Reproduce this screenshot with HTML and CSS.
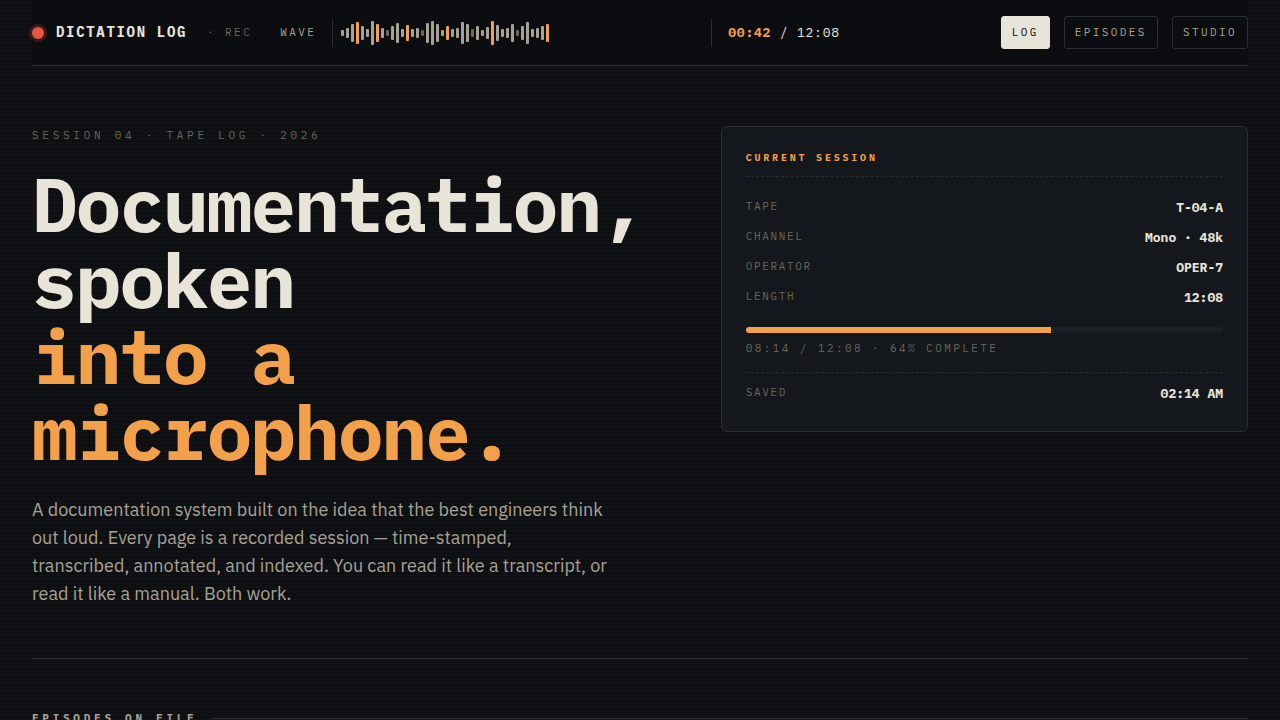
FILE: index.html
```html
<!DOCTYPE html>
<html lang="en">
<head>
    <meta charset="UTF-8">
    <meta name="viewport" content="width=device-width, initial-scale=1.0">
    <title>Dictation Log</title>
    <link rel="stylesheet" href="styles.css">
</head>
<body>
    <div class="page">
        <header class="deck">
            <div class="brand">
                <span class="rec-dot"></span>
                <span class="brand-name">DICTATION LOG</span>
                <span class="rec-label">· REC</span>
            </div>
            <div class="transport">
                <span class="wave-label">WAVE</span>
                <div class="wave" id="wave"></div>
                <div class="time"><b>00:42</b> / 12:08</div>
            </div>
            <nav class="tabs">
                <a class="tab active" href="#log">LOG</a>
                <a class="tab" href="#episodes">EPISODES</a>
                <a class="tab" href="#studio">STUDIO</a>
            </nav>
        </header>

        <main>
            <section class="hero" id="log">
                <div class="hero-text">
                    <p class="eyebrow">SESSION 04 · TAPE LOG · 2026</p>
                    <h1>Documentation, spoken <span class="accent">into a microphone.</span></h1>
                    <p class="lede">A documentation system built on the idea that the best engineers think out loud. Every page is a recorded session — time-stamped, transcribed, annotated, and indexed. You can read it like a transcript, or read it like a manual. Both work.</p>
                </div>

                <aside class="card">
                    <h2 class="card-title">CURRENT SESSION</h2>
                    <dl class="facts">
                        <div class="row"><dt>TAPE</dt><dd>T-04-A</dd></div>
                        <div class="row"><dt>CHANNEL</dt><dd>Mono · 48k</dd></div>
                        <div class="row"><dt>OPERATOR</dt><dd>OPER-7</dd></div>
                        <div class="row"><dt>LENGTH</dt><dd>12:08</dd></div>
                    </dl>
                    <div class="meter"><div class="meter-fill" style="width: 64%"></div></div>
                    <p class="meter-text">08:14 / 12:08 · 64% COMPLETE</p>
                    <dl class="facts saved">
                        <div class="row"><dt>SAVED</dt><dd>02:14 AM</dd></div>
                    </dl>
                </aside>
            </section>

            <section class="episodes" id="episodes">
                <h2 class="section-title">EPISODES ON FILE</h2>
            </section>
        </main>
    </div>

    <script src="script.js"></script>
</body>
</html>
```

FILE: styles.css
```css
:root {
    --bg: #0e0f12;
    --deck: #0c0d10;
    --card: #14171b;
    --track: #1c2024;
    --line: #2a2e36;
    --text: #e8e4d8;
    --soft: #a8a294;
    --dim: #6b675c;
    --amber: #f2a04a;
    --red: #e85545;
    --mono: "IBM Plex Mono", "Liberation Mono", monospace;
    --sans: "IBM Plex Sans", "Open Sans", sans-serif;
}
* {
    box-sizing: border-box;
}
body {
    margin: 0;
    background-color: var(--bg);
    background-image: repeating-linear-gradient(
        180deg,
        transparent 0,
        transparent 3px,
        rgba(255, 255, 255, 0.02) 3px,
        rgba(255, 255, 255, 0.02) 4px
    );
    color: var(--text);
    font-family: var(--sans);
}
h1, h2, p, dl, dd {
    margin: 0;
}
.page {
    max-width: 1280px;
    margin: 0 auto;
    padding: 0 32px;
}

/* top bar */
.deck {
    display: grid;
    grid-template-columns: auto 1fr auto;
    align-items: center;
    gap: 28px;
    padding: 16px 0;
    background: var(--deck);
    border-bottom: 1px solid var(--line);
    font-family: var(--mono);
    font-size: 11px;
    line-height: 15px;
    letter-spacing: 0.22em;
}
.brand {
    display: flex;
    align-items: center;
    gap: 12px;
}
.rec-dot {
    width: 12px;
    height: 12px;
    border-radius: 50%;
    background: var(--red);
    box-shadow: 0 0 0 3px rgba(232, 85, 69, 0.2);
}
.brand-name {
    font-size: 14px;
    font-weight: 700;
    letter-spacing: 0.12em;
}
.rec-label {
    margin-left: 8px;
    color: var(--dim);
}
.transport {
    display: flex;
    align-items: center;
    gap: 16px;
}
.wave-label {
    color: var(--soft);
}
.wave {
    flex: 0 1 380px;
    display: flex;
    align-items: center;
    gap: 2px;
    height: 28px;
    padding: 0 8px;
    overflow: hidden;
    border-left: 1px solid var(--line);
    border-right: 1px solid var(--line);
}
.bar {
    flex: none;
    width: 3px;
    border-radius: 1px;
    background: var(--soft);
}
.bar.hot {
    background: var(--amber);
}
.bar.low {
    background: var(--dim);
}
.time {
    font-size: 13px;
    letter-spacing: 0.06em;
    white-space: nowrap;
}
.time b {
    color: var(--amber);
}
.tabs {
    display: flex;
    gap: 14px;
}
.tab {
    padding: 8px 10px;
    border: 1px solid var(--line);
    border-radius: 3px;
    color: var(--soft);
    text-decoration: none;
}
.tab.active {
    background: var(--text);
    border-color: var(--text);
    color: var(--deck);
}

/* hero */
.hero {
    display: grid;
    grid-template-columns: 1.2fr 1fr;
    align-items: start;
    gap: 56px;
    padding: 60px 0 50px;
    border-bottom: 1px solid var(--line);
}
.eyebrow {
    margin-bottom: 22px;
    color: var(--dim);
    font-family: var(--mono);
    font-size: 11px;
    line-height: 18px;
    letter-spacing: 0.34em;
}
h1 {
    margin-bottom: 26px;
    font-family: var(--mono);
    font-size: 76px;
    font-weight: 700;
    line-height: 76px;
    letter-spacing: -0.025em;
}
.accent {
    display: block;
    color: var(--amber);
}
.lede {
    max-width: 580px;
    color: var(--soft);
    font-size: 18px;
    line-height: 28px;
}

/* session card */
.card {
    padding: 24px;
    background: var(--card);
    border: 1px solid var(--line);
    border-radius: 6px;
    font-family: var(--mono);
}
.card-title {
    margin-bottom: 14px;
    padding-bottom: 12px;
    border-bottom: 1px dashed var(--line);
    color: var(--amber);
    font-size: 10px;
    line-height: 13px;
    letter-spacing: 0.28em;
}
.row {
    display: flex;
    justify-content: space-between;
    padding: 8px 0 4px;
}
.row dt {
    color: var(--dim);
    font-size: 11px;
    line-height: 14px;
    letter-spacing: 0.15em;
}
.row dd {
    font-size: 13px;
    font-weight: 700;
    line-height: 18px;
}
.meter {
    height: 6px;
    margin: 16px 0 8px;
    overflow: hidden;
    border-radius: 3px;
    background: var(--track);
}
.meter-fill {
    height: 100%;
    background: var(--amber);
}
.meter-text {
    margin-bottom: 16px;
    color: var(--dim);
    font-size: 11px;
    line-height: 15px;
    letter-spacing: 0.22em;
}
.saved {
    padding-top: 4px;
    border-top: 1px dashed var(--line);
}

/* episodes */
.episodes {
    padding: 50px 0;
}
.section-title {
    display: flex;
    align-items: center;
    gap: 14px;
    color: var(--soft);
    font-family: var(--mono);
    font-size: 11px;
    line-height: 18px;
    letter-spacing: 0.34em;
}
.section-title::after {
    content: "";
    flex: 1;
    height: 1px;
    background: var(--line);
}
```

FILE: script.js
```js
// bar heights in px, "h" = highlighted, "l" = quiet
const levels = "6 10 18 22h 14 8 24 18h 10 6l 14 20 8 16h 8 10 6l 20 24 18 6 14h 8 10 22 18 8l 14 6 12 24h 16 8 10 18 6l 14 22 8 10 14 18h";
const wave = document.getElementById('wave');

levels.split(' ').forEach((level) => {
    const bar = document.createElement('span');
    bar.className = 'bar';
    if (level.endsWith('h')) bar.classList.add('hot');
    if (level.endsWith('l')) bar.classList.add('low');
    bar.style.height = parseInt(level) + 'px';
    wave.appendChild(bar);
});
```
